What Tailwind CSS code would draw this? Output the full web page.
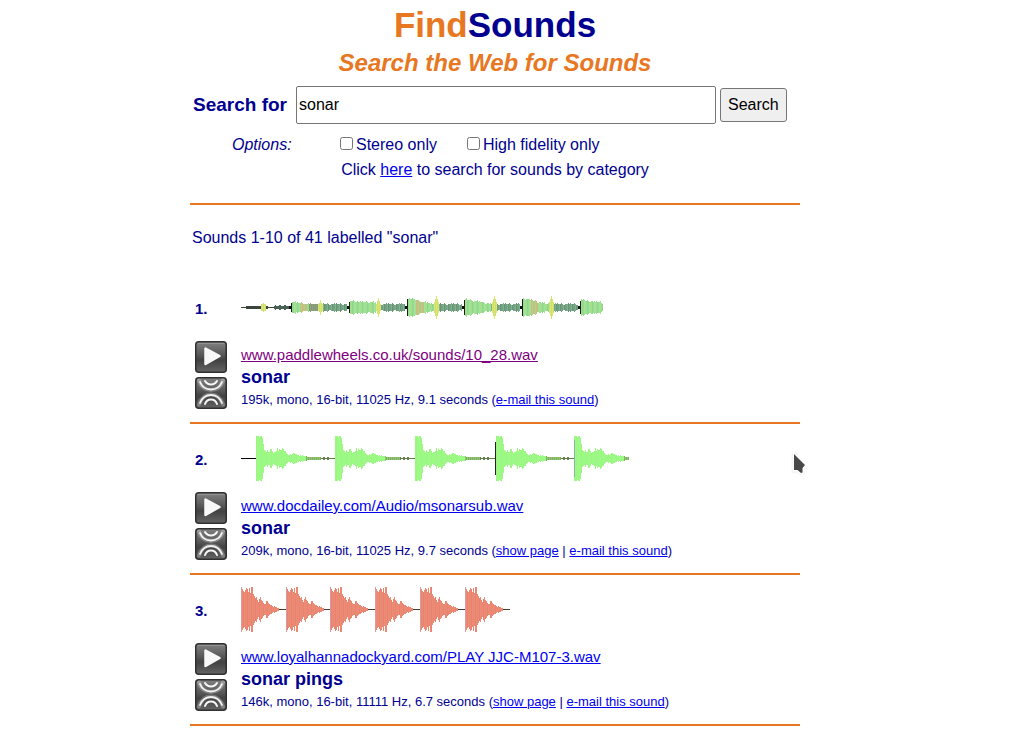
<!DOCTYPE html>
<html lang="en">
<head>
<meta charset="utf-8">
<meta name="viewport" content="width=device-width, initial-scale=1">
<title>FindSounds - Search the Web for Sounds</title>
<script src="https://cdn.jsdelivr.net/npm/@tailwindcss/browser@4"></script>
</head>
<body class="bg-white pr-6 font-['Liberation_Sans',Arial,sans-serif] text-base text-[#000090]">
<svg class="absolute size-0" aria-hidden="true">
  <defs>
    <linearGradient id="metal" x1="0" y1="0" x2="0" y2="1">
      <stop offset="0" stop-color="#828282"/><stop offset=".45" stop-color="#555"/><stop offset=".6" stop-color="#424242"/><stop offset="1" stop-color="#646464"/>
    </linearGradient>
    <symbol id="play" viewBox="0 0 32 32">
      <rect x=".75" y=".75" width="30.5" height="30.5" rx="3" fill="url(#metal)" stroke="#303030" stroke-width="1.5"/>
      <path d="M2.5 2.5h27" stroke="#a0a0a0" opacity=".6"/>
      <path d="M10.5 7.500v15.500l14-8z" fill="#f8f8f8" stroke="#f8f8f8" stroke-width="2.500" stroke-linejoin="round"/>
    </symbol>
    <symbol id="similar" viewBox="0 0 32 32">
      <rect x=".75" y=".75" width="30.5" height="30.5" rx="3" fill="url(#metal)" stroke="#303030" stroke-width="1.5"/>
      <g fill="none" stroke="#fff" stroke-linecap="round">
        <path d="M4 3.500C6 10 10 13 16 13s10-3 12-9.500M4 27.500C6 21 10 17.500 16 17.500s10 3.500 12 10" stroke-width="4" opacity=".25"/>
        <path d="M5 5C7 10 11 12.500 16 12.500S25 10 27 5M5 26c2-5 6-8 11-8s9 3 11 8" stroke-width="1.800" opacity=".9"/>
        <path d="M10 4c1.500 2.500 3.500 3.500 6 3.500s4.500-1 6-3.500M10 27c1-3 3.500-4.500 6-4.500s5 1.500 6 4.500" stroke-width="2" opacity=".95"/>
      </g>
    </symbol>
  </defs>
</svg>
<main class="mx-auto max-w-[610px]">
  <header class="text-center font-bold">
    <h1 class="pt-1 text-[35px] leading-[42px] text-[#e87722]">Find<span class="text-[#000090]">Sounds</span></h1>
    <p class="pt-1 text-2xl leading-[26px] text-[#e87722] italic">Search the Web for Sounds</p>
  </header>
  <form class="border-b-2 border-[#e87722] pt-[10px] pb-[21px]" onsubmit="return false">
    <div class="flex items-center gap-1 pl-[3px]">
      <label for="q" class="w-[99px] text-[19px] leading-6 font-bold whitespace-nowrap">Search for</label>
      <input id="q" type="text" value="sonar" class="h-[38px] w-[420px] min-w-0 rounded-xs border border-[#767676] bg-white px-[2px] text-black">
      <button class="h-[34px] rounded-[3px] border border-[#767676] bg-[#efefef] px-[7px] text-black">Search</button>
    </div>
    <div class="flex items-center pt-2 pl-[42px]">
      <span class="w-[108px] leading-6 italic">Options:</span>
      <label class="flex items-center gap-[3px] pt-px"><input type="checkbox" class="mb-[3px] size-[13px]">Stereo only</label>
      <label class="ml-[30px] flex items-center gap-[3px] pt-px"><input type="checkbox" class="mb-[3px] size-[13px]">High fidelity only</label>
    </div>
    <p class="pt-px text-center leading-6">Click <a href="#" class="text-[#0000ee] underline">here</a> to search for sounds by category</p>
  </form>
  <p class="pt-[21px] pb-[23px] pl-[2px] leading-6">Sounds 1-10 of 41 labelled "sonar"</p>
  <ol>
    <li class="grid grid-cols-[46px_1fr] border-b-2 border-[#e87722] pb-[10px] pl-[5px]">
      <span class="self-center pt-3 text-[15px] leading-5 font-bold">1.</span>
      <svg id="wave1" class="mt-2 h-[52px] w-full" shape-rendering="crispEdges" role="img" aria-label="Waveform"></svg>
      <div class="flex flex-col gap-1 pt-2">
        <button class="size-8" aria-label="Play"><svg class="size-8"><use href="#play"/></svg></button>
        <button class="size-8" aria-label="Find similar sounds"><svg class="size-8"><use href="#similar"/></svg></button>
      </div>
      <div class="pt-[11px]">
        <a href="#" class="block text-[15px] leading-[22px] text-[#800080] underline">www.paddlewheels.co.uk/sounds/10_28.wav</a>
        <h2 class="text-lg leading-[22px] font-bold">sonar</h2>
        <p class="text-[13px] leading-6">195k, mono, 16-bit, 11025 Hz, 9.1 seconds (<a href="#" class="text-[#0000ee] underline">e-mail this sound</a>)</p>
      </div>
    </li>
    <li class="grid grid-cols-[46px_1fr] border-b-2 border-[#e87722] pb-[10px] pl-[5px]">
      <span class="self-center pt-3 text-[15px] leading-5 font-bold">2.</span>
      <svg id="wave2" class="mt-2 h-[52px] w-full" shape-rendering="crispEdges" role="img" aria-label="Waveform"></svg>
      <div class="flex flex-col gap-1 pt-2">
        <button class="size-8" aria-label="Play"><svg class="size-8"><use href="#play"/></svg></button>
        <button class="size-8" aria-label="Find similar sounds"><svg class="size-8"><use href="#similar"/></svg></button>
      </div>
      <div class="pt-[11px]">
        <a href="#" class="block text-[15px] leading-[22px] text-[#0000ee] underline">www.docdailey.com/Audio/msonarsub.wav</a>
        <h2 class="text-lg leading-[22px] font-bold">sonar</h2>
        <p class="text-[13px] leading-6">209k, mono, 16-bit, 11025 Hz, 9.7 seconds (<a href="#" class="text-[#0000ee] underline">show page</a> | <a href="#" class="text-[#0000ee] underline">e-mail this sound</a>)</p>
      </div>
    </li>
    <li class="grid grid-cols-[46px_1fr] border-b-2 border-[#e87722] pb-[10px] pl-[5px]">
      <span class="self-center pt-3 text-[15px] leading-5 font-bold">3.</span>
      <svg id="wave3" class="mt-2 h-[52px] w-full" shape-rendering="crispEdges" role="img" aria-label="Waveform"></svg>
      <div class="flex flex-col gap-1 pt-2">
        <button class="size-8" aria-label="Play"><svg class="size-8"><use href="#play"/></svg></button>
        <button class="size-8" aria-label="Find similar sounds"><svg class="size-8"><use href="#similar"/></svg></button>
      </div>
      <div class="pt-[11px]">
        <a href="#" class="block text-[15px] leading-[22px] text-[#0000ee] underline">www.loyalhannadockyard.com/PLAY JJC-M107-3.wav</a>
        <h2 class="text-lg leading-[22px] font-bold">sonar pings</h2>
        <p class="text-[13px] leading-6">146k, mono, 16-bit, 11111 Hz, 6.7 seconds (<a href="#" class="text-[#0000ee] underline">show page</a> | <a href="#" class="text-[#0000ee] underline">e-mail this sound</a>)</p>
      </div>
    </li>
  </ol>
</main>
<svg class="pointer-events-none absolute top-[450px] left-[789px] h-7 w-5" viewBox="0 0 20 28" aria-hidden="true">
  <path d="M5 4v17l4-1 3 3 2-1-1-5h3z" fill="none" stroke="#e4e4e4" stroke-width="5" stroke-linejoin="round" opacity=".35"/>
  <path d="M5 4v16h3.500l3.500 3 1.500-.5v-4.500l2.500-3z" fill="#484848" stroke="#fff" stroke-width="2" paint-order="stroke"/>
</svg>
<script>
// Each waveform is a row of one-pixel bars, mirrored about a centre line.
function bar(out, x, half, color, mid = 26) {
  out.push(`<rect x="${x}" y="${mid - half}" width="1" height="${half * 2 + 1}" fill="${color}"/>`);
}
const jitter = [0, 1, 0, -1, 0, 0, 0, 1, 0, 0, 1, -1, 0];

// Sound 1: quiet lead-in, then tones that each start loud and hold a brief yellow chirp
const one = [];
const tones = [[50, 5, 3], [108, 6, 5], [166, 9, 5], [223, 8, 5], [281, 9, 5], [339, 7, 5]];
const chirps = [[22, 4], [79, 7], [137, 9], [195, 11], [253, 11], [310, 11]];
const dark = ['#4a6256', '#78a07f', '#66947b', '#80b388', '#6ca38a'];
const light = ['#9be38b', '#98dd8c', '#acdd8f', '#90d596', '#9ce69a'];
for (let x = 0; x < 362; x++) {
  const tone = tones.findLast(t => x >= t[0]);
  const chirp = chirps.find(c => Math.abs(x - c[0]) < 3);
  const n = jitter[(x * 5) % 13];
  let half, color;
  if (!tone) {
    half = x > 26 && x < 33 ? 0 : x < 5 ? 0 : 1 + (x > 33 && x % 5 > 2 ? 1 : 0);
    color = x < 33 ? '#3c453d' : dark[(x * 3) % 3];
  } else {
    const d = x - tone[0];
    if (d < 27) {
      half = Math.max(3, Math.round(tone[1] - (tone[1] - tone[2]) * d / 16) + n);
      color = light[(x * 3) % 5];
      if ([50, 166, 281].includes(tone[0]) && d > 8 && d < 17) color = x % 3 ? '#cbbd82' : '#a5d88b';
      if (tone[0] === 50 && d > 17) color = x % 2 ? '#9c9c79' : '#779f7d';
    } else {
      half = Math.max(2, 3 + n);
      color = dark[1 + (x * 3) % 4];
    }
    if (d === 0) { half = tone[1] - 1; color = '#182018'; }
  }
  if (tones.some(t => t[0] - x === 1 || t[0] - x === 2)) { half = 1; color = '#111'; }
  if (chirp) { half = Math.max(3, chirp[1] - Math.abs(x - chirp[0]) * 3); color = x % 2 ? '#dce76f' : '#d0df74'; }
  bar(one, x, half, color);
}
wave1.innerHTML = one.join('');

// Sound 2: five pings with a slow echo
const ping = [22, 22, 22, 21, 22, 22, 20, 14, 8, 7, 6, 8, 6, 6, 9, 9, 7, 5, 6, 6, 7, 10, 7, 9, 8, 8, 10, 9, 7, 7, 5, 4, 3, 3, 4, 3, 4, 5, 5, 4, 4, 3, 3, 2, 3, 2, 3, 2, 2, 2, 2, 1];
const starts2 = [15, 94, 174, 255, 333];
const two = [];
for (let x = 0; x < 388; x++) {
  const start = starts2.findLast(s => x >= s);
  if (start === undefined) { bar(two, x, 0, '#000'); continue; }
  const d = x - start, half = ping[d] ?? (d < 65 ? 1 : d < 75 ? +(x % 4 > 1) : 0);
  bar(two, x, half, d < 50 ? (x % 5 ? '#9afa85' : '#a2f280') : d < 65 ? (x % 2 ? '#80ae62' : '#8fc873') : '#65804f');
}
bar(two, 254, 16, '#1b291b');
bar(two, 333, 18, '#86b7a7');
wave2.innerHTML = two.join('');

// Sound 3: six short pings
const burst = [22, 20, 18, 17, 19, 21, 20, 17, 21, 16, 22, 22, 15, 13, 11, 12, 9, 7, 10, 12, 9, 8, 6, 5, 5, 8, 8, 6, 5, 4, 4, 3, 2, 3, 2, 2, 1, 1, 0, 0, 0, 0, 0, 0, 0, 0];
const starts3 = [0, 45, 89, 134, 179, 224];
const three = [];
for (let x = 0; x < 269; x++) {
  const d = x - starts3.findLast(s => x >= s);
  bar(three, x, burst[d], d > 37 ? '#483a30' : d === 0 ? '#dd9897' : ['#ec8772', '#e98c73', '#e78376', '#ed8a70'][(x * 3) % 4]);
}
wave3.innerHTML = three.join('');
</script>
</body>
</html>
